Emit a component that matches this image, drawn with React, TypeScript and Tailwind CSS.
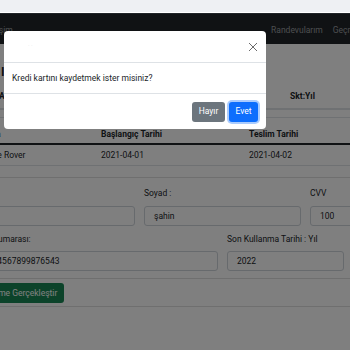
import React from "react";

export default function App() {
  return (
    <div className="relative w-[350px] h-[350px] overflow-hidden bg-white font-['Roboto',sans-serif] text-[#212529]">
      {/* top strip */}
      <div className="h-[13px] bg-[#eef0f3] border-b border-white" />
      {/* navbar */}
      <div className="h-[31px] bg-[#212529] flex items-center pt-[3px] text-[8.5px] text-[#9a9da0] overflow-hidden">
        <span className="ml-[-14px] shrink-0">Girişim</span>
        <div className="ml-auto flex gap-[10px] mr-[-21px] shrink-0">
          <span>Randevularım</span>
          <span>Geçmişim</span>
        </div>
      </div>

      {/* page content */}
      <div className="ml-[-27px] w-[560px] text-[8.5px]">
        <div className="pt-[22px] h-[41px] font-bold text-[12px] pl-[28px] leading-[12px]">I</div>
        {/* table 1 */}
        <div className="grid grid-cols-[312px_108px] h-[25px] items-center border-b-2 border-[#dee2e6] font-bold">
          <span className="pl-[26px]">Ad Soyad</span>
          <span className="pl-[5px]">Skt:Yıl</span>
        </div>
        <div className="h-[8px] border-b border-[#dee2e6]" />
        {/* table 2 */}
        <div className="grid grid-cols-[123px_148px_149px] h-[27px] items-end pb-[2px] border-b-2 border-[#212529] font-bold">
          <span className="pl-[5px]">Araba</span>
          <span className="pl-[5px]">Başlangıç Tarihi</span>
          <span className="pl-[5px]">Teslim Tarihi</span>
        </div>
        <div className="grid grid-cols-[123px_148px_149px] h-[21px] items-center border-b border-[#dee2e6]">
          <span className="pl-[5px]">Range Rover</span>
          <span className="pl-[5px]">2021-04-01</span>
          <span className="pl-[5px]">2021-04-02</span>
        </div>
        {/* card */}
        <div className="mt-[11px] border border-[#dfdfdf] rounded-[3px]">
          <div className="px-[4px] pt-[9px] pb-[7px]">
            <div className="flex gap-[9px]">
              <div className="w-[157px] shrink-0 flex flex-col">
                <span className="h-[19px] leading-[13px] pl-[1px]">Ad :</span>
                <div className="h-[20px] border border-[#ced4da] rounded-[3px] px-[9px] flex items-center"></div>
              </div>
              <div className="w-[157px] shrink-0 flex flex-col">
                <span className="h-[19px] leading-[13px]">Soyad :</span>
                <div className="h-[20px] border border-[#ced4da] rounded-[3px] px-[9px] flex items-center">şahin</div>
              </div>
              <div className="w-[157px] shrink-0 flex flex-col">
                <span className="h-[19px] leading-[13px]">CVV</span>
                <div className="h-[20px] border border-[#ced4da] rounded-[3px] px-[9px] flex items-center">100</div>
              </div>
            </div>
            <div className="flex gap-[9px] mt-[7px]">
              <div className="w-[245px] ml-[-5px] shrink-0 flex flex-col">
                <span className="h-[18px] leading-[13px] pl-[1px]">Kart Numarası:</span>
                <div className="h-[20px] border border-[#ced4da] rounded-[3px] px-[9px] flex items-center">1234567899876543</div>
              </div>
              <div className="w-[117px] shrink-0 flex flex-col">
                <span className="h-[18px] leading-[13px] whitespace-nowrap">Son Kullanma Tarihi : Yıl</span>
                <div className="h-[20px] border border-[#ced4da] rounded-[3px] px-[9px] flex items-center">2022</div>
              </div>
            </div>
          </div>
          <div className="border-t border-[#dfdfdf] px-[4px] pt-[4px] pb-[3px]">
            <button className="ml-[-2px] h-[20px] px-[7px] bg-[#198754] text-white rounded-[3px] text-[8.5px]">Ödeme Gerçekleştir</button>
          </div>
        </div>
      </div>

      {/* backdrop */}
      <div className="absolute left-0 right-0 top-[14px] bottom-0 bg-black/50" />

      {/* modal */}
      <div className="absolute left-[4px] top-[31px] w-[262px] bg-white rounded-[4px] text-[8.5px] text-[#212529]">
        <div className="h-[32px] border-b border-[#dee2e6] flex items-center px-[8px]">
          <span className="text-[6px] text-[#e3e3e3] ml-[16px] mb-[4px]">· ·</span>
          <svg className="ml-auto" width="10" height="10" viewBox="0 0 10 10">
            <path d="M1 1L9 9M9 1L1 9" stroke="#6b6b6b" strokeWidth="1" />
          </svg>
        </div>
        <div className="h-[31px] border-b border-[#dee2e6] flex items-center px-[8px]">
          Kredi kartını kaydetmek ister misiniz?
        </div>
        <div className="h-[35px] flex items-center justify-end gap-[4px] pr-[8px]">
          <button className="h-[20px] w-[33px] bg-[#6c757d] text-white rounded-[3px] text-[8.5px]">Hayır</button>
          <button className="h-[20px] w-[29px] bg-[#0d6efd] text-white rounded-[3px] text-[8.5px] ring-2 ring-[#86b7fe]/70">Evet</button>
        </div>
      </div>
    </div>
  );
}
